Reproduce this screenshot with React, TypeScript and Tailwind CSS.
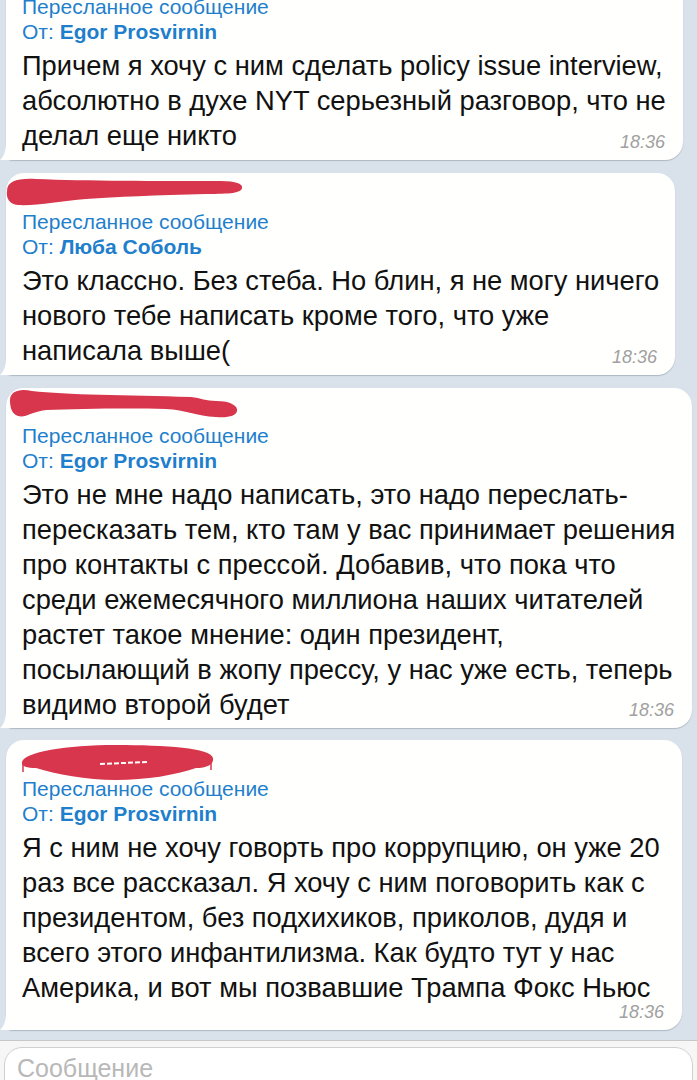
import React from "react";

type Msg = {
  width: number;
  from: string;
  lines: string[];
  scribble?: 0 | 1 | 2 | 3;
  ownLine?: boolean;
  tight?: boolean;
};

const RED = "#d8364d";

function Scribble({ kind }: { kind: number }) {
  if (kind === 1) {
    return (
      <svg className="absolute left-0 top-0" width="250" height="40" viewBox="0 0 250 40">
        <path
          d="M1,18 C1,8 12,5 30,6 C80,8 150,8 215,8 C230,8 237,11 236,15 C235,20 225,21 200,21 C150,22 110,24 80,26 C55,28 30,33 12,32 C3,31 0,25 1,18 Z"
          fill={RED}
        />
      </svg>
    );
  }
  if (kind === 2) {
    return (
      <svg className="absolute left-0 top-0" width="250" height="40" viewBox="0 0 250 40">
        <path
          d="M4,12 C4,3 14,0 26,3 C60,7 120,7 185,9 C195,10 200,13 210,13 C225,13 232,18 231,23 C230,28 222,30 210,29 C190,28 180,22 160,21 C120,20 70,21 40,22 C25,24 20,30 12,28 C6,26 4,20 4,12 Z"
          fill={RED}
        />
      </svg>
    );
  }
  if (kind === 3) {
    return (
      <svg className="absolute left-0 top-0" width="250" height="45" viewBox="0 0 250 45">
        <path
          d="M16,22 C18,12 60,5 110,5 C160,5 205,8 207,18 C208,25 200,28 190,28 C170,35 140,40 110,40 C80,40 50,34 30,28 C20,28 15,26 16,22 Z"
          fill={RED}
        />
        <path d="M17,24 L17,32 M205,22 L205,30" stroke={RED} strokeWidth="1.5" />
        <path d="M94,24 L141,22" stroke="#ffffff" strokeWidth="2" strokeDasharray="5 2" />
      </svg>
    );
  }
  return null;
}

function Bubble({ m }: { m: Msg }) {
  return (
    <div
      className={
        "relative bg-[#fffffd] rounded-[18px] rounded-bl-[6px] pl-[16px] pr-[12px] shadow-[0_1px_1px_rgba(90,110,130,0.35)] " +
        (m.tight ? "pt-[10px] pb-[6px]" : "pt-[11px] pb-[7px]")
      }
      style={{ width: m.width }}
    >
      {m.scribble ? <div className="h-[25px]" /> : null}
      <div className="text-[21px] leading-[25px] text-[#1f7fcc] whitespace-nowrap">Пересланное сообщение</div>
      <div className="text-[21px] leading-[25px] text-[#1f7fcc] whitespace-nowrap">
        От: <span className="font-bold">{m.from}</span>
      </div>
      <div className="mt-[4px] text-[27.3px] leading-[35px] text-[#111111] whitespace-nowrap">
        {m.lines.map((l, i) => (
          <div key={i}>{l}</div>
        ))}
      </div>
      {m.ownLine ? <div className="h-[18px]" /> : null}
      <span className="absolute right-[18px] bottom-[9px] text-[18px] leading-[18px] italic text-[#a0a0a0]">
        18:36
      </span>
      <svg className="absolute left-[-6px] bottom-0" width="14" height="18" viewBox="0 0 14 18">
        <path d="M6,0 C6,9 4,14 0,18 L14,18 L14,0 Z" fill="#fffffd" />
      </svg>
      {m.scribble ? <Scribble kind={m.scribble} /> : null}
    </div>
  );
}

const msgs: Msg[] = [
  {
    width: 677,
    from: "Egor Prosvirnin",
    lines: [
      "Причем я хочу с ним сделать policy issue interview,",
      "абсолютно в духе NYT серьезный разговор, что не",
      "делал еще никто",
    ],
  },
  {
    width: 669,
    from: "Люба Соболь",
    scribble: 1,
    lines: [
      "Это классно. Без стеба. Но блин, я не могу ничего",
      "нового тебе написать кроме того, что уже",
      "написала выше(",
    ],
  },
  {
    width: 686,
    from: "Egor Prosvirnin",
    scribble: 2,
    tight: true,
    lines: [
      "Это не мне надо написать, это надо переслать-",
      "пересказать тем, кто там у вас принимает решения",
      "про контакты с прессой. Добавив, что пока что",
      "среди ежемесячного миллиона наших читателей",
      "растет такое мнение: один президент,",
      "посылающий в жопу прессу, у нас уже есть, теперь",
      "видимо второй будет",
    ],
  },
  {
    width: 676,
    from: "Egor Prosvirnin",
    scribble: 3,
    ownLine: true,
    lines: [
      "Я с ним не хочу говорть про коррупцию, он уже 20",
      "раз все рассказал. Я хочу с ним поговорить как с",
      "президентом, без подхихиков, приколов, дудя и",
      "всего этого инфантилизма. Как будто тут у нас",
      "Америка, и вот мы позвавшие Трампа Фокс Ньюс",
    ],
  },
];

export default function App() {
  return (
    <div
      className="w-[697px] h-[1080px] overflow-hidden flex flex-col bg-[#d9e1ea]"
      style={{ fontFamily: '"Liberation Sans", Arial, sans-serif' }}
    >
      <div className="flex-1 min-h-0 overflow-hidden flex flex-col justify-end pl-[6px] pb-[10px]">
        <div className="mb-[13px]">
          <Bubble m={msgs[0]} />
        </div>
        <div className="mb-[13px]">
          <Bubble m={msgs[1]} />
        </div>
        <div className="mb-[12px]">
          <Bubble m={msgs[2]} />
        </div>
        <div>
          <Bubble m={msgs[3]} />
        </div>
      </div>
      <div className="h-[40px] shrink-0 border-t border-[#c8c8c8] bg-[#f6f6f6] overflow-hidden pl-[4px] pr-[4px] pt-[6px]">
        <div className="h-[60px] rounded-[18px] border border-[#d0d0d0] bg-white pl-[12px] pt-[6px] text-[25px] leading-[28px] text-[#b8b8b8]">
          Сообщение
        </div>
      </div>
    </div>
  );
}
